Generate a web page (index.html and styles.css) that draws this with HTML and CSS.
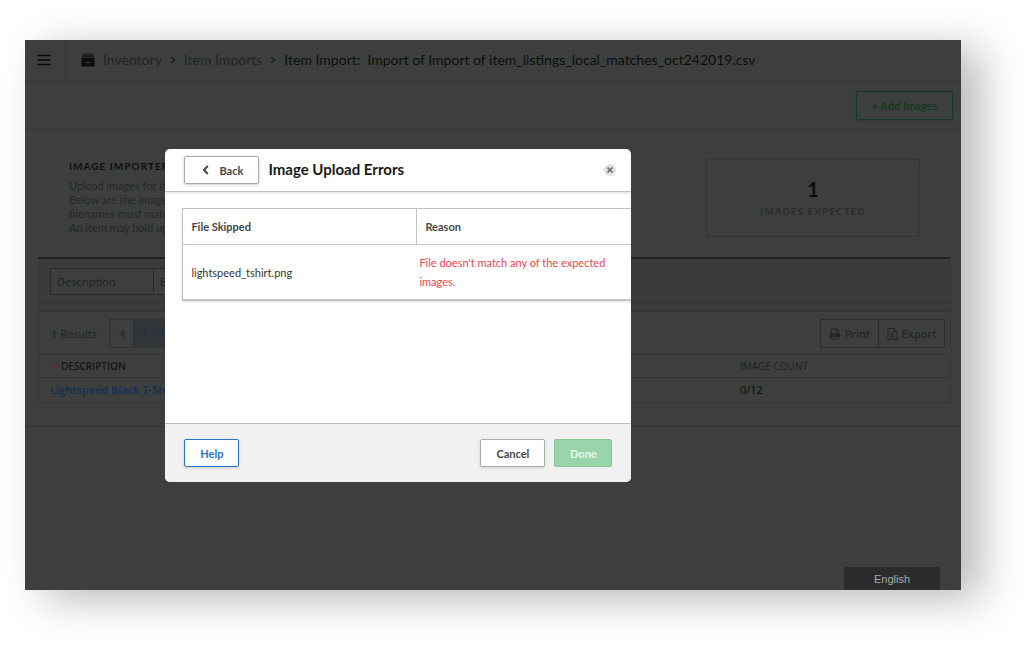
FILE: index.html
```html
<!DOCTYPE html>
<html lang="en">
<head>
<meta charset="utf-8">
<title>Item Import</title>
<link rel="stylesheet" href="styles.css">
</head>
<body>
<div class="window">
  <header class="topbar">
    <button class="menu" aria-label="Menu">
      <svg width="14" height="12" viewBox="0 0 14 12"><path d="M1 1.500h12M1 6h12M1 10.500h12" stroke="currentColor" stroke-width="1.600" stroke-linecap="round"/></svg>
    </button>
    <nav class="crumbs" aria-label="Breadcrumb">
      <svg width="14" height="14" viewBox="0 0 14 14"><path d="M2 0h10l.5 1.500h-11z" fill="#222524"/><path d="M1.300 2h11.400l.8 2H.5z" fill="#1b1e1d"/><path d="M.5 4.500h13v8a1 1 0 0 1-1 1h-11a1 1 0 0 1-1-1z" fill="#0b0e0d"/><path d="M5.500 9.500h3" stroke="#4c4f4e" stroke-width="1"/></svg>
      <a href="#">Inventory</a>
      <svg width="6" height="8" viewBox="0 0 6 8"><path d="M1 1l3.500 3L1 7" fill="none" stroke="#1c1f1e" stroke-width="1.500"/></svg>
      <a href="#">Item Imports</a>
      <svg width="6" height="8" viewBox="0 0 6 8"><path d="M1 1l3.500 3L1 7" fill="none" stroke="#1c1f1e" stroke-width="1.500"/></svg>
      <span class="current">Item Import:&nbsp; Import of Import of item_listings_local_matches_oct242019.csv</span>
    </nav>
  </header>
  <div class="toolbar"><button class="add">+ Add Images</button></div>
  <main class="content">
    <section class="intro">
      <div class="intro-text">
        <h2>IMAGE IMPORTER</h2>
        <p>Upload images for items<br>Below are the images<br>filenames must match<br>An item may hold up</p>
      </div>
      <div class="stat"><strong>1</strong><span>IMAGES EXPECTED</span></div>
    </section>
    <section class="listing">
      <div class="filters">
        <input type="text" placeholder="Description" aria-label="Description">
        <input type="text" placeholder="EAN" aria-label="EAN">
      </div>
      <div class="strip"></div>
      <div class="results">
        <span class="count">1 Results</span>
        <div class="pager">
          <button class="prev" aria-label="Previous page"><svg width="6" height="10" viewBox="0 0 6 10"><path d="M6 0v10L0 5z" fill="#2e3130"/></svg></button>
          <button class="range">1 - 1</button>
        </div>
        <div class="exports">
          <button class="print"><svg width="12" height="12" viewBox="0 0 12 12" fill="none" stroke="currentColor"><path d="M2.500 6V1h5l2 2v3" stroke-width="1.200"/><path d="M7.500 1v2h2" /><path d="M1 9V6.500Q1 5.500 2 5.500h8q1 0 1 1V9z" fill="currentColor"/><path d="M2.500 8.500v2.500h7V8.500z" fill="#3d3f3e"/></svg>Print</button>
          <button class="export"><svg width="11" height="12" viewBox="0 0 11 12" fill="none" stroke="currentColor"><path d="M1 .5h6l3 3v8H1z"/><path d="M7 .5v3h3M3.500 5l3.500 5M7 5l-3.500 5M3 5h1.500M6 5h1.500M3 10h1.500M6 10h1.500"/></svg>Export</button>
        </div>
      </div>
      <table class="items">
        <thead><tr><th class="sorted"><svg width="7" height="5" viewBox="0 0 7 5"><path d="M.7 4l2.800-2.800L6.300 4" fill="none" stroke="#7a2028" stroke-width="1.300"/></svg>DESCRIPTION</th><th>IMAGE COUNT</th></tr></thead>
        <tbody><tr><td><a href="#">Lightspeed Black T-Shirt</a></td><td>0/12</td></tr></tbody>
      </table>
    </section>
  </main>
  <div class="overlay">
    <div class="dialog" role="dialog" aria-labelledby="dialog-title">
      <header class="dialog-head">
        <button class="btn back"><svg width="7" height="10" viewBox="0 0 7 10"><path d="M5.800 1L2 5l3.800 4" fill="none" stroke="currentColor" stroke-width="2"/></svg>Back</button>
        <h1 id="dialog-title">Image Upload Errors</h1>
        <button class="close" aria-label="Close"><svg width="6" height="6" viewBox="0 0 6 6"><path d="M.5.5l5 5M5.500.5l-5 5" stroke="currentColor" stroke-width="1.800"/></svg></button>
      </header>
      <div class="dialog-body">
        <table class="errors">
          <thead><tr><th>File Skipped</th><th>Reason</th></tr></thead>
          <tbody><tr><td>lightspeed_tshirt.png</td><td class="reason">File doesn't match any of the expected images.</td></tr></tbody>
        </table>
      </div>
      <footer class="dialog-foot">
        <button class="btn help">Help</button>
        <button class="btn cancel">Cancel</button>
        <button class="btn done" disabled>Done</button>
      </footer>
    </div>
  </div>
  <button class="language">English</button>
</div>
</body>
</html>
```
FILE: styles.css
```css
* { box-sizing: border-box; }
body {
  margin: 0;
  min-height: 100vh;
  padding: 40px 75px 60px 25px;
  display: grid;
  background: #fff;
  font-family: Lato, sans-serif;
  font-size: 11px;
  color: #0b0e0d;
}
button, input { font: inherit; margin: 0; }
button { display: inline-flex; align-items: center; justify-content: center; padding: 0; }
a { text-decoration: none; }
svg { flex: none; }

.window {
  position: relative;
  min-width: 0;
  background: #3d3f3e;
  box-shadow: 20px 9px 40px rgba(0, 0, 0, .28);
}
.topbar {
  display: flex;
  height: 42px;
  border-bottom: 1px solid #373938;
  box-shadow: inset 0 -1px 1px #3b3d3c;
}
.menu {
  width: 41px;
  padding: 0 2px 2px 0;
  border: 0;
  border-right: 1px solid #333534;
  background: none;
  color: #080b0a;
}
.crumbs {
  display: flex;
  align-items: center;
  gap: 8px;
  padding: 0 15px 2px;
  font-size: 14px;
  white-space: nowrap;
}
.crumbs a { color: #222524; }
.toolbar {
  display: flex;
  justify-content: flex-end;
  padding: 9px 8px;
  border-bottom: 1px solid #363837;
}
.add {
  width: 97px;
  height: 29px;
  border: 1px solid #153a22;
  border-radius: 2px;
  background: none;
  color: #153820;
  font-weight: 700;
  box-shadow: 0 1px 2px #343635;
}
.content {
  padding: 29px 10px 23px 13px;
  border-bottom: 1px solid #333534;
}
.intro {
  display: flex;
  justify-content: space-between;
  padding: 0 31px 20px;
}
.intro-text { padding-top: 1px; }
.intro h2 {
  margin: 0 0 6px;
  font-size: 10px;
  line-height: 13px;
  font-weight: 900;
  letter-spacing: 1px;
  color: #101312;
}
.intro p { margin: 0; line-height: 14px; color: #242726; }
.stat {
  display: flex;
  flex-direction: column;
  align-items: center;
  justify-content: center;
  gap: 4px;
  width: 214px;
  height: 78px;
  border: 1px solid #333534;
  border-radius: 2px;
}
.stat strong { font-size: 20px; line-height: 22px; }
.stat span {
  font-size: 10px;
  line-height: 14px;
  font-weight: 900;
  letter-spacing: 1px;
  color: #2b2e2d;
}

.listing {
  border: 1px solid #363837;
  border-top: 2px solid #202322;
  font-family: "Open Sans", sans-serif;
  color: #1f2221;
}
.filters {
  display: flex;
  padding: 9px 11px 7px;
  background: #3a3c3b;
  border-bottom: 1px solid #333534;
}
.filters input {
  width: 104px;
  height: 27px;
  padding: 0 6px;
  border: 1px solid #282b2a;
  border-radius: 0;
  background: #3d3f3e;
}
.filters input + input { border-left: 0; }
.filters input::placeholder { color: #1f2221; opacity: 1; }
.strip { height: 9px; background: #3a3c3b; border-bottom: 1px solid #333534; }
.results {
  display: flex;
  align-items: center;
  padding: 7px 5px 6px 12px;
}
.count { width: 58px; }
.pager, .exports { display: flex; }
.results button {
  height: 29px;
  border: 1px solid #303332;
  background: none;
  color: #242726;
}
.results .prev { width: 25px; }
.results .range {
  width: 40px;
  border-left: 0;
  background: #323538;
  color: #142e50;
  font-size: 12px;
}
.exports { margin-left: auto; }
.results .exports button {
  gap: 4px;
  border-color: #2b2e2d;
  font-weight: 600;
}
.print { width: 59px; }
.export { width: 66px; }
.results .exports .export { border-left: 0; }
.items { width: 100%; border-collapse: collapse; table-layout: fixed; }
.items th, .items td {
  height: 24px;
  padding: 0 11px;
  border-top: 1px solid #333534;
  text-align: left;
  font-weight: 400;
}
.items th { height: 23px; font-size: 10px; }
.items th:first-child { width: 690px; }
.items .sorted { font-weight: 600; color: #131615; }
.sorted svg { margin-right: 4px; vertical-align: 1px; }
.items td { color: #0b0e0d; }
.items td a { font-weight: 600; color: #142f55; }

.overlay {
  position: absolute;
  inset: 0;
  padding: 109px 0 0 15%;
}
.dialog {
  display: flex;
  flex-direction: column;
  width: 466px;
  max-width: 100%;
  min-height: 333px;
  overflow: hidden;
  border-radius: 5px;
  background: #fff;
  color: #333635;
}
.dialog-head {
  display: flex;
  align-items: center;
  height: 43px;
  padding: 0 15px 0 19px;
  border-bottom: 1px solid #bec4c4;
  box-shadow: 0 1px 3px #ddd;
}
.dialog-head h1 {
  margin: 0 auto 0 9px;
  padding-bottom: 2px;
  font-size: 15px;
  line-height: 20px;
  font-weight: 700;
  color: #171a19;
}
.btn {
  height: 28px;
  border: 1px solid #a7afad;
  border-radius: 2px;
  background: #fff;
  color: #444746;
  font-weight: 700;
  box-shadow: 0 1px 3px #ccc;
}
.back { width: 75px; gap: 10px; padding-left: 2px; }
.close {
  width: 12px;
  height: 12px;
  border: 0;
  border-radius: 50%;
  background: #e0e0e0;
  color: #777;
}
.dialog-body { flex: 1; padding: 16px 0 16px 17px; overflow: hidden; }
.errors {
  width: 468px;
  table-layout: fixed;
  border-spacing: 0;
  border: 1px solid #bdc5c8;
  border-bottom-width: 2px;
  box-shadow: 0 1px 2px #ddd;
  font-size: 11px;
}
.errors th { height: 36px; padding: 0 8px; text-align: left; border-bottom: 1px solid #bdc5c8; color: #444746; }
.errors th + th { border-left: 1px solid #bdc5c8; }
.errors td { height: 54px; padding: 0 8px; line-height: 19px; }
.errors .reason { padding: 0 20px 0 3px; color: #ee4650; }
.dialog-foot {
  display: flex;
  gap: 9px;
  padding: 15px 19px;
  border-top: 1px solid #bdc0c0;
  background: #f1f1f1;
}
.help { width: 55px; margin-right: auto; border-color: #2875c7; color: #2875c7; }
.cancel { width: 65px; }
.done { width: 58px; border-color: #8cc49c; background: #99d5aa; color: #e9f8ed; box-shadow: none; }
.language {
  position: absolute;
  right: 21px;
  bottom: 0;
  width: 96px;
  height: 23px;
  border: 0;
  border-radius: 2px 2px 0 0;
  background: #2b2b2b;
  color: #aaa;
  font-family: "Liberation Sans", sans-serif;
}
```
